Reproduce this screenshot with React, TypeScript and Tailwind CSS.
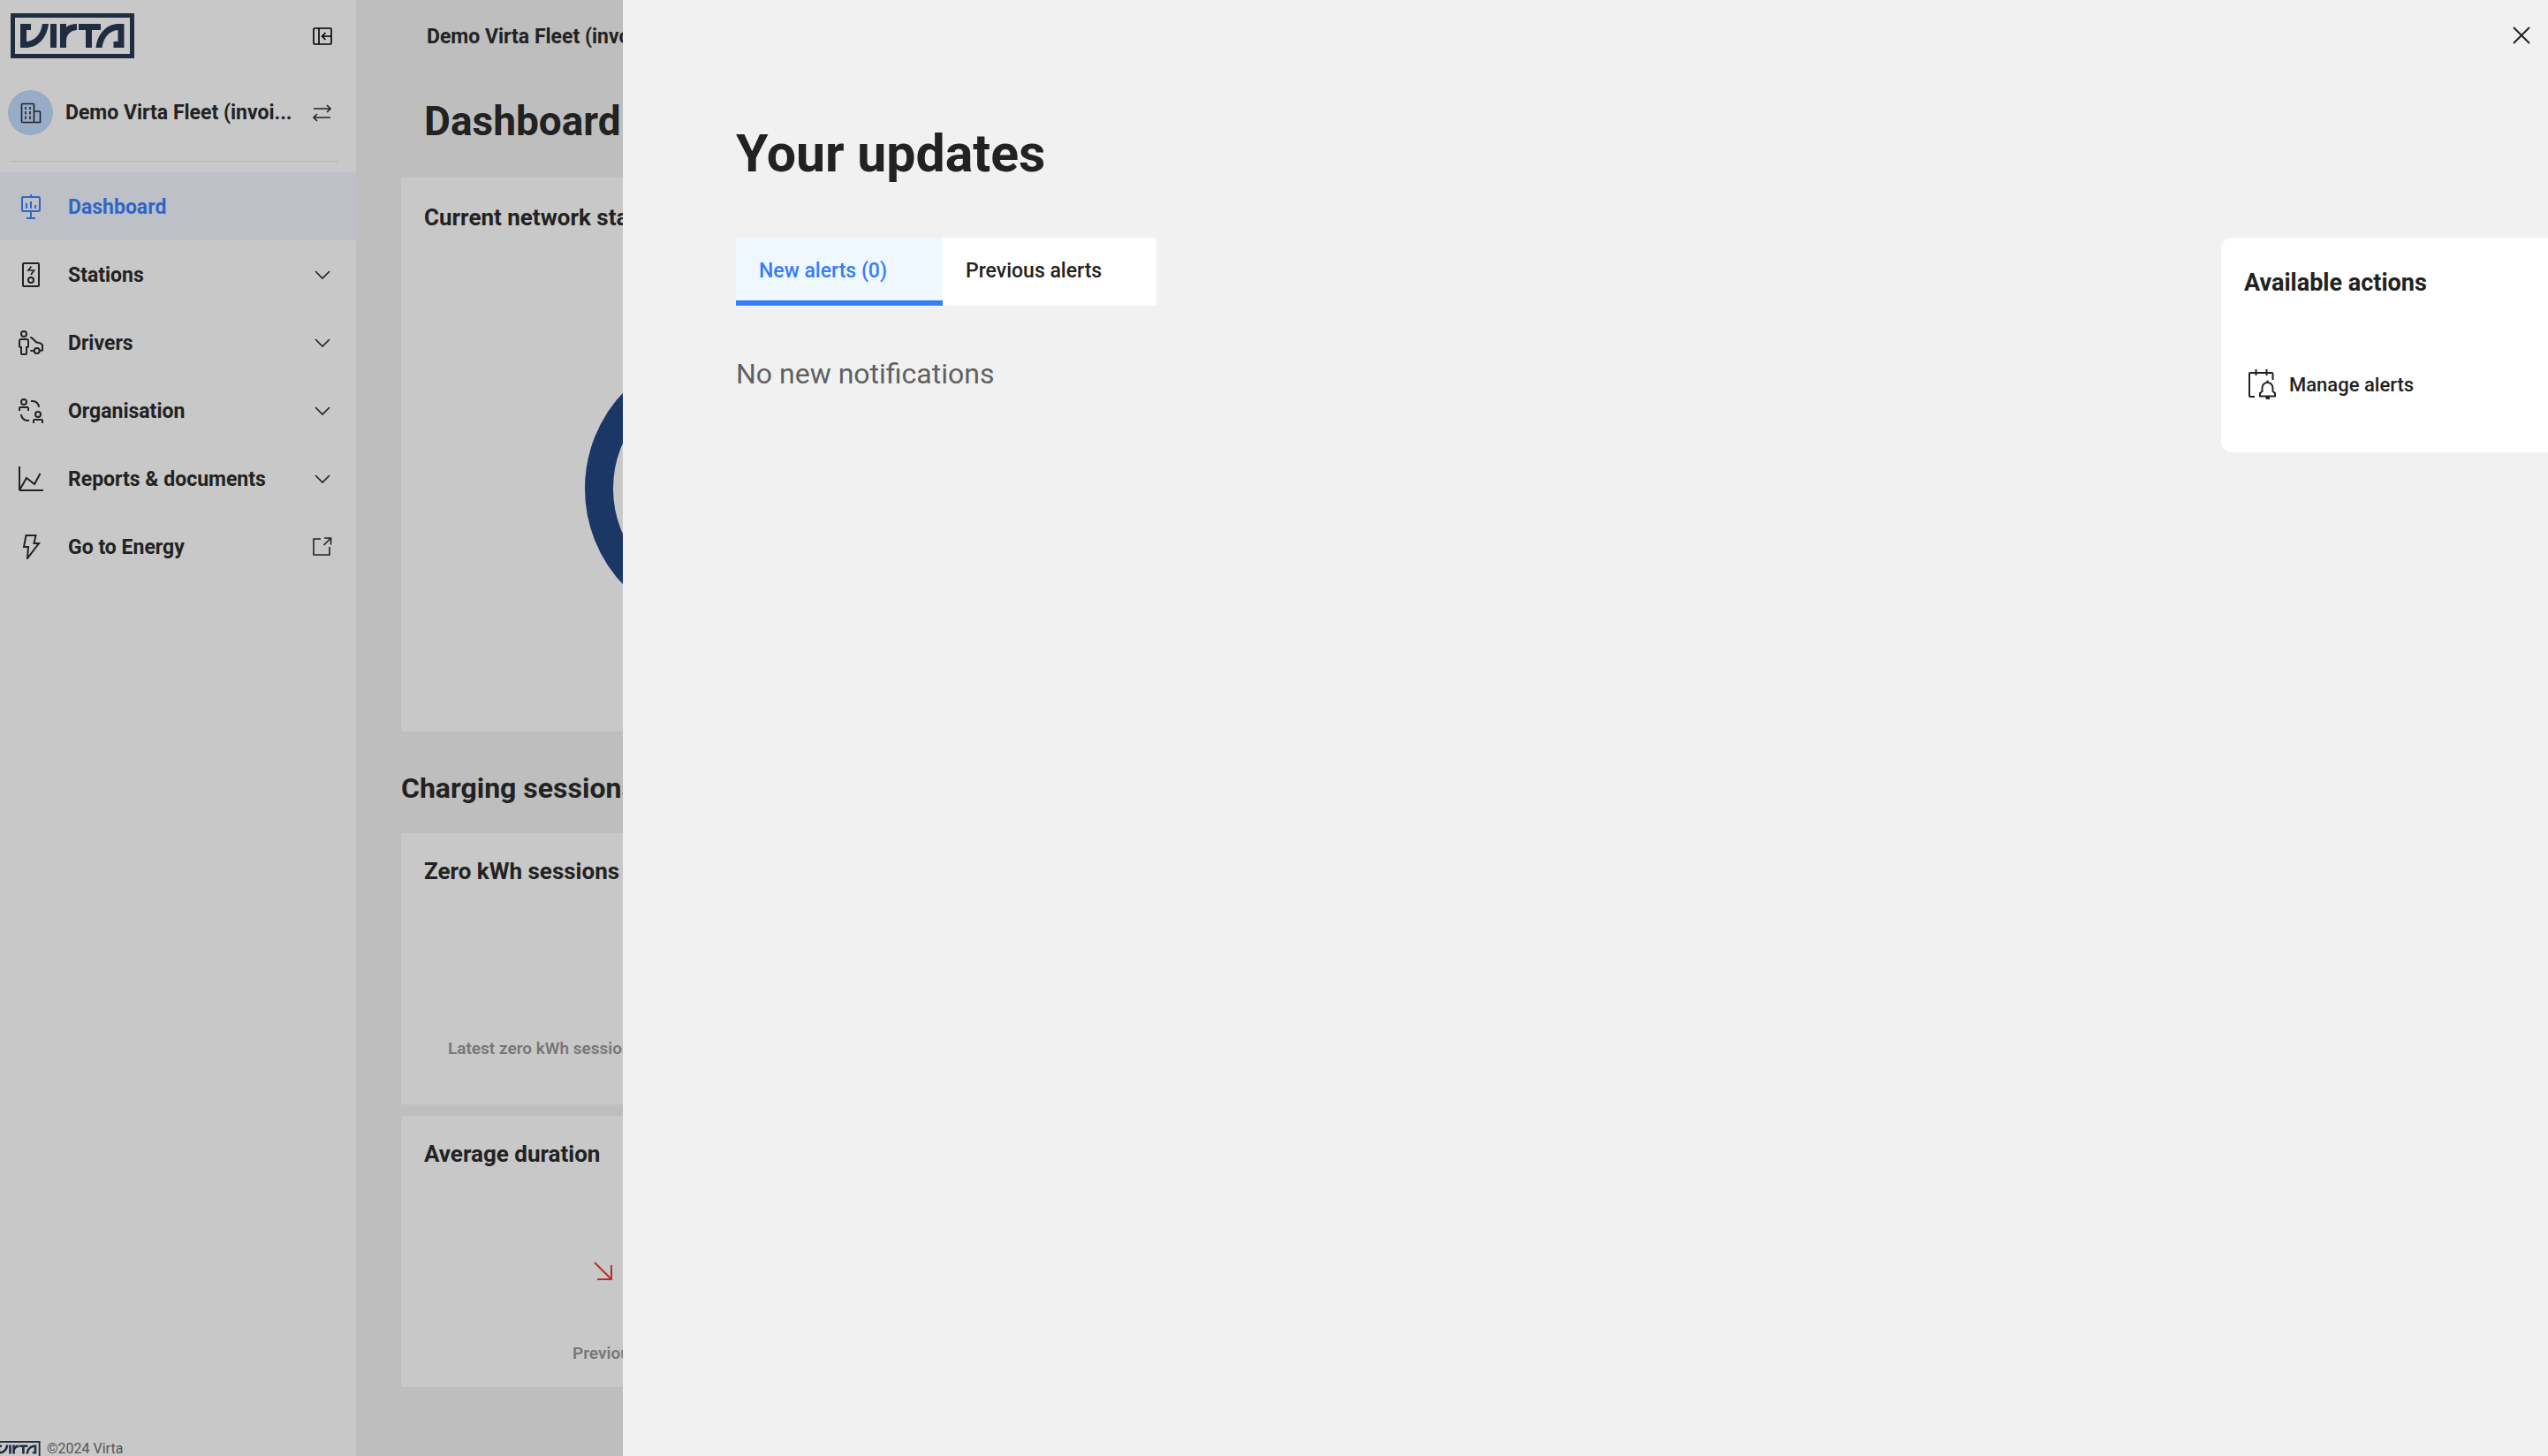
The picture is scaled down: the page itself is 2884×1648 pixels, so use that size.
import type { ReactNode } from "react";

type IconProps = { children: ReactNode; size?: string; box?: string; stroke?: number };

function Icon({
  children,
  size = "h-6 w-6",
  box = "0 0 24 24",
  stroke = 1.6,
}: IconProps) {
  return (
    <svg
      className={`${size} shrink-0`}
      viewBox={box}
      fill="none"
      stroke="currentColor"
      strokeWidth={stroke}
      aria-hidden="true"
    >
      {children}
    </svg>
  );
}

function NavIcon({ children }: { children: ReactNode }) {
  return (
    <Icon size="h-7 w-7" box="0 0 28 28" stroke={2}>
      {children}
    </Icon>
  );
}

function Logo({ className }: { className: string }) {
  const hook =
    "M11 12H23V19H18V32C27 31 34 25 36 12H43C41 29 30 39 17 39H11Z";
  return (
    <svg
      className={`${className} shrink-0 text-[#202d40]`}
      viewBox="0 0 140 51"
      fill="currentColor"
      role="img"
      aria-label="Virta"
    >
      <rect
        x="2.5"
        y="2.5"
        width="135"
        height="46"
        fill="none"
        stroke="currentColor"
        strokeWidth="5"
      />
      <path d={hook} />
      <rect x="45" y="12" width="7" height="27" />
      <path d="M56 12H63V16C66 13 70 12 75 12V19C67 20 63 24 63 32V39H56Z" />
      <path d="M77 12H102V19H92V39H85V19H77Z" />
      <path d={hook} transform="rotate(180 69.75 25.5)" />
    </svg>
  );
}

const navItems = [
  {
    label: "Dashboard",
    active: true,
    icon: (
      <>
        <rect x="4" y="3" width="20" height="16" rx="1" />
        <path d="M14 0V3M9 10V16M14 8V16M19 12V16M14 19V27M9 27H19" />
      </>
    ),
  },
  {
    label: "Stations",
    trailing: "chevron",
    icon: (
      <>
        <rect x="5" y="1" width="18" height="26" rx="1" />
        <path d="M14.5 4.5L11 9H17.5L14 14" strokeWidth="1.7" />
        <circle cx="14" cy="20" r="3" />
      </>
    ),
  },
  {
    label: "Drivers",
    trailing: "chevron",
    icon: (
      <>
        <circle cx="6" cy="4" r="3" />
        <path d="M3 19V26a1 1 0 0 0 1 1H8a1 1 0 0 0 1-1V19h1a1 1 0 0 0 1-1V12a2 2 0 0 0-2-2H3a2 2 0 0 0-2 2v6a1 1 0 0 0 1 1Z" />
        <path d="M13.3 7.5L16 9.3 20 13.3 25 14.6 27 16.5V22.5L24 23M13.3 23H17.5" />
        <circle cx="20.7" cy="23" r="3" />
      </>
    ),
  },
  {
    label: "Organisation",
    trailing: "chevron",
    icon: (
      <>
        <circle cx="6" cy="4" r="3" />
        <path d="M1 14V11a1 1 0 0 1 1-1H10a1 1 0 0 1 1 1V14" />
        <path d="M14 3H16a7 7 0 0 1 7 7M3 18a7 7 0 0 0 7 7h2" />
        <circle cx="22" cy="18" r="3" />
        <path d="M17 28V25a1 1 0 0 1 1-1h8a1 1 0 0 1 1 1v3" />
      </>
    ),
  },
  {
    label: "Reports & documents",
    trailing: "chevron",
    icon: (
      <>
        <path d="M1 0V26a1 1 0 0 0 1 1H28" />
        <path d="M1.5 26L9 13 18 20 24.5 8" />
      </>
    ),
  },
  {
    label: "Go to Energy",
    trailing: "external",
    icon: <path d="M8.5 1H19.5L17.5 10H23L10 27 11 14H6Z" />,
  },
];

function Sidebar() {
  return (
    <aside className="flex w-[403px] shrink-0 flex-col bg-[#c8c8c8]">
      <div className="flex items-start justify-between pt-[15px] pr-[26px] pl-3">
        <a href="#home">
          <Logo className="h-[51px] w-[140px]" />
        </a>
        <button type="button" aria-label="Collapse menu" className="mt-[14px] text-black">
          <Icon>
            <rect x="2" y="3" width="20" height="18" rx="1" />
            <path d="M8 3V21M22 12H12M15.5 8L11.5 12 15.5 16" />
          </Icon>
        </button>
      </div>

      {/* Organisation switcher */}
      <button
        type="button"
        className="mt-9 flex items-center pr-[26px] pl-[9px] text-left"
      >
        <span className="flex h-[51px] w-[51px] items-center justify-center rounded-full bg-[#98abc7]">
          <Icon>
            <rect x="1.5" y="1.5" width="14" height="21" rx="1" />
            <path d="M16 10H21.5a1 1 0 0 1 1 1V22.5H16" />
            <path d="M6 5v3M11 5v3M6 10v3.5M11 10v3.5M6 15.5V19M11 15.5V19" />
          </Icon>
        </span>
        <span className="ml-[14px] flex-1 pt-[2px] text-[23px] font-bold">
          Demo Virta Fleet (invoi...
        </span>
        <Icon>
          <path d="M2 7H21M17 3L21 7 17 11M21 17H2.5M6 13L2 17 6 21" />
        </Icon>
      </button>

      <hr className="mt-[29px] mr-5 ml-3 border-[#b4b4b4]" />

      <nav className="mt-3">
        {navItems.map((item) => (
          <a
            key={item.label}
            href="#nav"
            className={`flex h-[77px] items-center pr-[26px] pl-[21px] text-[23px] font-bold ${
              item.active ? "bg-[#bdc1c7] text-[#3066c6]" : ""
            }`}
          >
            <NavIcon>{item.icon}</NavIcon>
            <span className="ml-7 flex-1 pt-[3px]">{item.label}</span>
            {item.trailing === "chevron" && (
              <Icon>
                <path d="M4 8L12 16 20 8" />
              </Icon>
            )}
            {item.trailing === "external" && (
              <Icon>
                <path d="M10 3H2V21H20V12M13.5 10L21 2.5M14 2H21.5V9.5" />
              </Icon>
            )}
          </a>
        ))}
      </nav>

      <footer className="mt-auto -ml-[7px] flex h-[17px] items-start gap-[7px]">
        <Logo className="h-[19px] w-[53px]" />
        <span className="text-[16px] leading-[17px] text-[#555]">©2024 Virta</span>
      </footer>
    </aside>
  );
}

function Dashboard() {
  return (
    <main className="min-w-0 flex-1 px-[51px]">
      <div className="flex h-[84px] items-center pl-[29px] text-[23px] font-bold">
        <span>Demo Virta Fleet (invoi...</span>
      </div>
      <h1 className="mt-[26px] mb-[37px] pl-[26px] text-[46px] leading-[54px] font-bold">
        Dashboard
      </h1>

      <section className="flex h-[627px] w-[732px] flex-col bg-[#c8c8c8] px-[26px] pt-[29px]">
        <h2 className="text-[26px] leading-8 font-bold">Current network status</h2>
        <svg
          className="mx-auto mt-[133px] h-[316px] w-[316px] shrink-0"
          viewBox="0 0 316 316"
          aria-hidden="true"
        >
          <circle
            cx="158"
            cy="158"
            r="142"
            fill="none"
            stroke="#1b3765"
            strokeWidth="32"
          />
        </svg>
      </section>

      <h2 className="mt-11 mb-[31px] text-[32px] leading-10 font-bold">
        Charging sessions
      </h2>

      <div className="flex w-[732px] flex-col gap-[13px]">
        <section className="flex h-[307px] flex-col justify-between bg-[#c8c8c8] px-[26px] pt-[27px] pb-[51px]">
          <h3 className="text-[26px] leading-8 font-bold">Zero kWh sessions</h3>
          <p className="pl-[27px] text-[19px] leading-6 font-semibold text-[#777]">
            Latest zero kWh sessions
          </p>
        </section>
        <section className="flex h-[307px] flex-col bg-[#c8c8c8] px-[26px] pt-[27px]">
          <h3 className="text-[26px] leading-8 font-bold">Average duration</h3>
          <div className="mt-[105px] pl-[191px] text-[#bd2d22]">
            <Icon stroke={2}>
              <path d="M2 2L21 21M21 5V21H5" />
            </Icon>
          </div>
          <p className="mt-[69px] pl-[168px] text-[19px] leading-6 font-semibold text-[#777]">
            Previous
          </p>
        </section>
      </div>
    </main>
  );
}

function UpdatesDrawer() {
  return (
    <div
      role="dialog"
      aria-label="Your updates"
      className="absolute inset-y-0 right-0 left-[705px] bg-[#f1f1f1]"
    >
      <div className="flex h-20 items-center justify-end pr-[18px]">
        <button type="button" aria-label="Close">
          <Icon stroke={2}>
            <path d="M3 3L21 21M21 3L3 21" />
          </Icon>
        </button>
      </div>

      <div className="pl-32">
        <h1 className="mt-[59px] text-[59px] leading-[70px] font-bold">Your updates</h1>

        <div className="mt-[60px] flex items-start justify-between">
          <div>
            <div role="tablist" className="flex text-[23px] font-medium">
              <button
                type="button"
                role="tab"
                aria-selected="true"
                className="h-[77px] w-[234px] border-b-6 border-[#367df8] bg-[#eff7ff] px-[26px] pt-[6px] text-left text-[#367df8]"
              >
                New alerts (0)
              </button>
              <button
                type="button"
                role="tab"
                aria-selected="false"
                className="h-[77px] w-[242px] bg-white px-[26px] text-left"
              >
                Previous alerts
              </button>
            </div>
            <p className="mt-[57px] text-[32px] leading-10 text-[#606060]">
              No new notifications
            </p>
          </div>

          {/* Actions card, flush with the right edge */}
          <aside className="w-[370px] rounded-l-xl bg-white px-[26px] pt-[35px] pb-[60px]">
            <h2 className="text-[27px] leading-8 font-bold">Available actions</h2>
            <button
              type="button"
              className="mt-[82px] flex items-center gap-[14px] pl-1 text-[22px] font-medium"
            >
              <Icon size="h-[34px] w-[33px]" box="0 0 33 34" stroke={2}>
                <path d="M8 31H3a1 1 0 0 1-1-1V5a1 1 0 0 1 1-1H27.5a1 1 0 0 1 1 1V12" />
                <path d="M9.5 0V7M21.5 0V7" />
                <path d="M22.5 12.5V15M14 30.5V27L16.5 25V21a6 6 0 0 1 12 0V25L31 27V30.5Z" />
                <path d="M20.5 32.5H25" strokeWidth="3" />
              </Icon>
              Manage alerts
            </button>
          </aside>
        </div>
      </div>
    </div>
  );
}

export default function App() {
  return (
    <div className="relative flex h-screen overflow-hidden bg-[#bebebe] font-[Roboto,sans-serif] text-[#222]">
      <Sidebar />
      <Dashboard />
      <UpdatesDrawer />
    </div>
  );
}
